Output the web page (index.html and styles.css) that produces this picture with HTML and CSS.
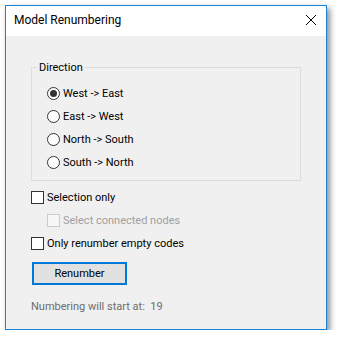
FILE: index.html
```html
<!DOCTYPE html>
<html>
<head>
<meta charset="utf-8">
<link rel="stylesheet" href="styles.css">
</head>
<body>
<div class="window">
  <div class="titlebar">
    <span class="title">Model Renumbering</span>
    <svg class="close" width="12" height="12" viewBox="0 0 12 12"><path d="M1 1L11 11M11 1L1 11" stroke="#000" stroke-width="1" fill="none"/></svg>
  </div>
  <div class="content">
    <div class="group">
      <span class="legend">Direction</span>
      <div class="row"><span class="radio checked"></span><span>West -&gt; East</span></div>
      <div class="row"><span class="radio"></span><span>East -&gt; West</span></div>
      <div class="row"><span class="radio"></span><span>North -&gt; South</span></div>
      <div class="row"><span class="radio"></span><span>South -&gt; North</span></div>
    </div>
    <div class="row first"><span class="check"></span><span>Selection only</span></div>
    <div class="row indent disabled"><span class="check"></span><span>Select connected nodes</span></div>
    <div class="row"><span class="check"></span><span>Only renumber empty codes</span></div>
    <div class="button">Renumber</div>
    <div class="footer">Numbering will start at:&nbsp; 19</div>
  </div>
</div>
</body>
</html>
```
FILE: styles.css
```css
html, body {
  margin: 0;
  padding: 0;
  background: #ffffff;
}
body {
  padding: 5px 0 0 5px;
  font-family: "Roboto", "Noto Sans", sans-serif;
  font-size: 11px;
  color: #000;
}
.window {
  width: 320px;
  height: 323px;
  border: 1px solid #1883d7;
  background: #f0f0f0;
  box-shadow: 3px 3px 6px rgba(0,0,0,0.45);
  display: flex;
  flex-direction: column;
}
.titlebar {
  height: 30px;
  background: #fff;
  display: flex;
  align-items: center;
  justify-content: space-between;
  padding: 0 9px 0 8px;
  flex-shrink: 0;
}
.title {
  font-size: 12px;
  line-height: 15px;
  padding-bottom: 1px;
}
.close {
  display: block;
  margin-top: -2px;
}
.content {
  padding: 0 25px;
}
.group {
  position: relative;
  margin-top: 31px;
  border: 1px solid #dcdcdc;
  padding: 14px 0 6px 15px;
}
.legend {
  position: absolute;
  top: -8px;
  left: 5px;
  padding: 0 2px;
  background: #f0f0f0;
  line-height: 15px;
}
.row {
  height: 23px;
  display: flex;
  align-items: center;
  gap: 3px;
}
.row.first {
  margin-top: 5px;
}
.row.indent {
  padding-left: 16px;
}
.radio {
  width: 11px;
  height: 11px;
  border: 1px solid #333;
  border-radius: 50%;
  background: #fff;
  display: flex;
  align-items: center;
  justify-content: center;
  flex-shrink: 0;
}
.radio.checked::after {
  content: "";
  width: 7px;
  height: 7px;
  border-radius: 50%;
  background: #333;
}
.check {
  width: 11px;
  height: 11px;
  border: 1px solid #333;
  background: #fff;
  flex-shrink: 0;
}
.disabled {
  color: #a0a0a0;
}
.disabled .check {
  border-color: #cccccc;
  background: #f7f7f7;
}
.button {
  margin-top: 7px;
  margin-left: 1px;
  width: 91px;
  height: 19px;
  border: 2px solid #0078d7;
  background: #e1e1e1;
  display: flex;
  align-items: center;
  justify-content: center;
  line-height: 15px;
}
.footer {
  margin-top: 14px;
  line-height: 15px;
  color: #6d6d6d;
}
```
